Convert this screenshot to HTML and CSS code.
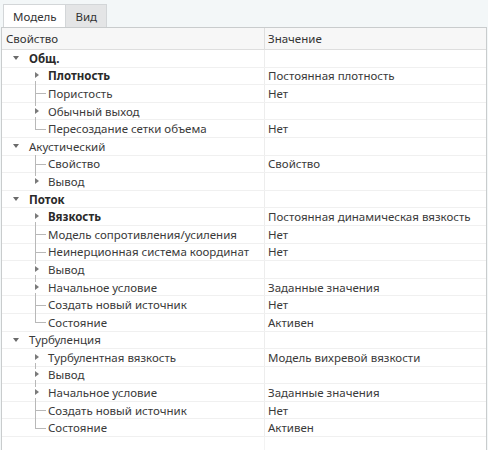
FILE: index.html
```html
<!DOCTYPE html>
<html lang="ru">
<head>
<meta charset="utf-8">
<link rel="stylesheet" href="styles.css">
</head>
<body>
<div class="tabs">
  <div class="tab active">Модель</div>
  <div class="tab">Вид</div>
</div>
<div class="panel">
  <div class="head">
    <div class="hcell">Свойство</div>
    <div class="hcell val">Значение</div>
  </div>
  <div class="rows">
    <div class="row"><div class="name l0"><span class="exp down"></span><b>Общ.</b></div><div class="value"></div></div>
    <div class="row"><div class="name l1 first has"><span class="guide"></span><span class="exp right"></span><b>Плотность</b></div><div class="value">Постоянная плотность</div></div>
    <div class="row"><div class="name l1"><span class="guide"></span>Пористость</div><div class="value">Нет</div></div>
    <div class="row"><div class="name l1 has"><span class="guide"></span><span class="exp right"></span>Обычный выход</div><div class="value"></div></div>
    <div class="row"><div class="name l1 last"><span class="guide"></span>Пересоздание сетки объема</div><div class="value">Нет</div></div>

    <div class="row"><div class="name l0"><span class="exp down"></span>Акустический</div><div class="value"></div></div>
    <div class="row"><div class="name l1"><span class="guide"></span>Свойство</div><div class="value">Свойство</div></div>
    <div class="row"><div class="name l1 last has"><span class="guide"></span><span class="exp right"></span>Вывод</div><div class="value"></div></div>

    <div class="row"><div class="name l0"><span class="exp down"></span><b>Поток</b></div><div class="value"></div></div>
    <div class="row"><div class="name l1 first has"><span class="guide"></span><span class="exp right"></span><b>Вязкость</b></div><div class="value">Постоянная динамическая вязкость</div></div>
    <div class="row"><div class="name l1"><span class="guide"></span>Модель сопротивления/усиления</div><div class="value">Нет</div></div>
    <div class="row"><div class="name l1"><span class="guide"></span>Неинерционная система координат</div><div class="value">Нет</div></div>
    <div class="row"><div class="name l1 has"><span class="guide"></span><span class="exp right"></span>Вывод</div><div class="value"></div></div>
    <div class="row"><div class="name l1 has"><span class="guide"></span><span class="exp right"></span>Начальное условие</div><div class="value">Заданные значения</div></div>
    <div class="row"><div class="name l1"><span class="guide"></span>Создать новый источник</div><div class="value">Нет</div></div>
    <div class="row"><div class="name l1 last"><span class="guide"></span>Состояние</div><div class="value">Активен</div></div>

    <div class="row"><div class="name l0"><span class="exp down"></span>Турбуленция</div><div class="value"></div></div>
    <div class="row"><div class="name l1 first has"><span class="guide"></span><span class="exp right"></span>Турбулентная вязкость</div><div class="value">Модель вихревой вязкости</div></div>
    <div class="row"><div class="name l1 has"><span class="guide"></span><span class="exp right"></span>Вывод</div><div class="value"></div></div>
    <div class="row"><div class="name l1 has"><span class="guide"></span><span class="exp right"></span>Начальное условие</div><div class="value">Заданные значения</div></div>
    <div class="row"><div class="name l1"><span class="guide"></span>Создать новый источник</div><div class="value">Нет</div></div>
    <div class="row"><div class="name l1 last"><span class="guide"></span>Состояние</div><div class="value">Активен</div></div>
  </div>
  <div class="filler">
    <div class="fcell"></div>
    <div class="fcell val"></div>
  </div>
</div>
</body>
</html>
```
FILE: styles.css
```css
html, body {
  margin: 0;
  padding: 0;
}
body {
  width: 488px;
  height: 450px;
  overflow: hidden;
  font-family: "Noto Sans", "Open Sans", sans-serif;
  font-size: 11.5px;
  color: #3a3a3a;
  background: #f3f7f8;
}
.tabs {
  display: flex;
  height: 23px;
  padding: 4px 0 0 3px;
}
.tab {
  display: flex;
  align-items: center;
  padding: 0 9px;
  border: 1px solid #d3d6d8;
  border-bottom: none;
  background: #e4e5e6;
  color: #333;
}
.tab.active {
  background: #ffffff;
}
.tab + .tab {
  border-left: none;
}
.panel {
  margin-left: 1px;
  width: 484px;
  height: 422px;
  border: 1px solid #c9cccd;
  border-bottom: none;
  background: #ffffff;
  display: flex;
  flex-direction: column;
}
.head {
  display: grid;
  grid-template-columns: 262px 1fr;
  height: 21px;
  background: #f7f7f7;
  border-bottom: 1px solid #dedede;
}
.hcell {
  display: flex;
  align-items: center;
  padding-left: 4px;
  color: #333;
}
.hcell.val {
  border-left: 1px solid #dedede;
  padding-left: 3px;
}
.rows {
  display: flex;
  flex-direction: column;
}
.row {
  display: grid;
  grid-template-columns: 262px 1fr;
  height: 17.6px;
  box-sizing: border-box;
  border-bottom: 1px solid #f0f0f0;
}
.name {
  display: flex;
  align-items: center;
  position: relative;
  white-space: nowrap;
}
.name b {
  font-weight: 700;
  color: #2a2a2a;
}
.value {
  display: flex;
  align-items: center;
  border-left: 1px solid #ededed;
  padding-left: 3px;
  white-space: nowrap;
}
.l0 {
  padding-left: 11px;
}
.l0 .exp {
  margin-right: 10px;
}
.l1 {
  padding-left: 46px;
}
.guide {
  position: absolute;
  left: 33px;
  top: -1px;
  bottom: -1px;
  width: 11px;
}
.guide::before {
  content: "";
  position: absolute;
  left: 0;
  top: 0;
  bottom: 0;
  border-left: 1px solid #b8b8b8;
}
.guide::after {
  content: "";
  position: absolute;
  left: 0;
  width: 11px;
  top: 50%;
  border-top: 1px solid #b8b8b8;
}
.has .guide::after {
  display: none;
}
.first .guide::before {
  top: 50%;
}
.last .guide::before {
  bottom: 50%;
}
.exp.down {
  display: inline-block;
  width: 0;
  height: 0;
  border-left: 3px solid transparent;
  border-right: 3px solid transparent;
  border-top: 4px solid #6a6a6a;
}
.exp.right {
  position: absolute;
  left: 31px;
  top: 50%;
  width: 7px;
  height: 11px;
  margin-top: -5.5px;
  background: #ffffff;
}
.exp.right::before {
  content: "";
  position: absolute;
  left: 2px;
  top: 2px;
  width: 0;
  height: 0;
  border-top: 3.5px solid transparent;
  border-bottom: 3.5px solid transparent;
  border-left: 4px solid #7a7a7a;
}
.filler {
  flex: 1;
  display: grid;
  grid-template-columns: 262px 1fr;
}
.fcell.val {
  border-left: 1px solid #f3f3f3;
}
```
